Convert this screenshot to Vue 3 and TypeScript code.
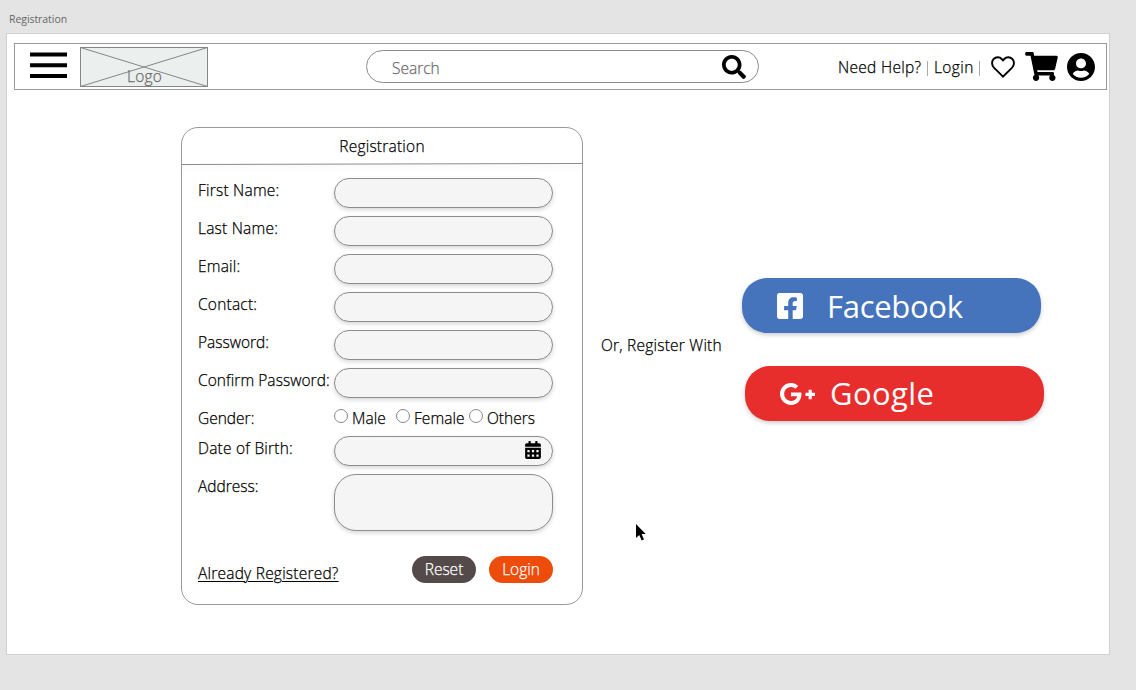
<script setup lang="ts">
interface Field {
  label: string
  id: string
  kind: 'text' | 'gender' | 'date' | 'area'
}

const fields: Field[] = [
  { label: 'First Name:', id: 'first', kind: 'text' },
  { label: 'Last Name:', id: 'last', kind: 'text' },
  { label: 'Email:', id: 'email', kind: 'text' },
  { label: 'Contact:', id: 'contact', kind: 'text' },
  { label: 'Password:', id: 'password', kind: 'text' },
  { label: 'Confirm Password:', id: 'confirm', kind: 'text' },
  { label: 'Gender:', id: 'gender', kind: 'gender' },
  { label: 'Date of Birth:', id: 'dob', kind: 'date' },
  { label: 'Address:', id: 'address', kind: 'area' },
]
const genders: string[] = ['Male', 'Female', 'Others']
</script>

<template>
  <div class="canvas">
    <div class="board-name"><span>Registration</span></div>
    <main class="board">
      <header class="nav">
        <svg class="menu" viewBox="0 0 37 27"><path d="M0 .5h37v4H0zM0 11.3h37v4H0zM0 22h37v4H0z" /></svg>
        <div class="logo">
          <svg viewBox="0 0 128 40"><rect x=".5" y=".5" width="127" height="39" /><path d="M.5.5l127 39M127.5.5L.5 39.5" /></svg>
          <span>Logo</span>
        </div>
        <div class="search">
          <span>Search</span>
          <svg viewBox="0 0 512 512"><path d="M505 442.7L405.3 343c-4.5-4.5-10.6-7-17-7H372c27.6-35.3 44-79.7 44-128C416 93.1 322.9 0 208 0S0 93.1 0 208s93.1 208 208 208c48.3 0 92.7-16.4 128-44v16.3c0 6.4 2.5 12.5 7 17l99.7 99.7c9.4 9.4 24.6 9.4 33.9 0l28.3-28.3c9.4-9.4 9.4-24.6.1-34zM208 336c-70.7 0-128-57.2-128-128 0-70.7 57.2-128 128-128 70.7 0 128 57.2 128 128 0 70.7-57.2 128-128 128z" /></svg>
        </div>
        <div class="links">
          <span class="help">Need Help?</span><i></i><span class="signin">Login</span><i></i>
        </div>
        <svg class="heart" viewBox="0 0 24 22"><path d="M12 20.6L2.9 11.6C.6 9.2.5 5.500 2.500 3.200 5 .5 8.600.8 10.700 3L12 4.400 13.300 3C15.400.8 19 .5 21.500 3.200c2 2.300 1.900 6-.4 8.400z" /></svg>
        <svg class="cart" viewBox="0 0 576 512"><path d="M528.12 301.319l47.273-208C578.806 78.301 567.391 64 551.99 64H159.208l-9.166-44.81C147.758 8.021 137.93 0 126.529 0H24C10.745 0 0 10.745 0 24v16c0 13.255 10.745 24 24 24h69.883l70.248 343.435C147.325 417.1 136 435.222 136 456c0 30.928 25.072 56 56 56s56-25.072 56-56c0-15.674-6.447-29.835-16.824-40h209.647C430.447 426.165 424 440.326 424 456c0 30.928 25.072 56 56 56s56-25.072 56-56c0-22.172-12.888-41.332-31.579-50.405l5.517-24.276c3.413-15.018-8.002-29.319-23.403-29.319H218.117l-6.545-32h293.145c11.206 0 20.92-7.754 23.403-18.681z" /></svg>
        <svg class="user" viewBox="0 8 496 496"><path d="M248 8C111 8 0 119 0 256s111 248 248 248 248-111 248-248S385 8 248 8zm0 96c48.6 0 88 39.4 88 88s-39.4 88-88 88-88-39.4-88-88 39.4-88 88-88zm0 344c-58.7 0-111.3-26.6-146.5-68.2 18.8-35.4 55.6-59.8 98.5-59.8 2.4 0 4.8.4 7.1 1.1 13 4.2 26.6 6.9 40.9 6.9 14.3 0 28-2.7 40.9-6.9 2.3-.7 4.7-1.1 7.1-1.1 42.9 0 79.7 24.4 98.5 59.8C359.3 421.4 306.7 448 248 448z" /></svg>
      </header>

      <div class="content">
        <section class="card">
          <h1><span>Registration</span></h1>
          <svg class="rule" viewBox="0 0 400 2" preserveAspectRatio="none"><path d="M0 1.500L400 .5" /></svg>
          <div class="rows">
            <div v-for="f in fields" :key="f.id" class="row" :class="'row-' + f.kind">
              <span class="label" :class="'l-' + f.id">{{ f.label }}</span>
              <div v-if="f.kind === 'gender'" class="genders">
                <span v-for="g in genders" :key="g" class="option" :class="'o-' + g.toLowerCase()"><b></b><span>{{ g }}</span></span>
              </div>
              <div v-else class="box">
                <svg v-if="f.kind === 'date'" viewBox="0 0 448 512"><path fill-rule="evenodd" d="M0 464c0 26.500 21.500 48 48 48h352c26.500 0 48-21.500 48-48V192H0zM64 256h64v64H64zm128 0h64v64h-64zm128 0h64v64h-64zM64 384h64v64H64zm128 0h64v64h-64zm128 0h64v64h-64zM400 64h-48V16c0-8.800-7.200-16-16-16h-32c-8.800 0-16 7.200-16 16v48H160V16c0-8.800-7.200-16-16-16h-32c-8.800 0-16 7.200-16 16v48H48C21.500 64 0 85.500 0 112v48h448v-48c0-26.500-21.500-48-48-48z" /></svg>
              </div>
            </div>
          </div>
          <div class="actions">
            <a>Already Registered?</a>
            <button class="reset">Reset</button>
            <button class="login">Login</button>
          </div>
        </section>

        <p class="or">Or, Register With</p>

        <div class="social">
          <div class="pill facebook">
            <svg viewBox="0 32 448 448"><path d="M400 32H48A48 48 0 0 0 0 80v352a48 48 0 0 0 48 48h145V327.700h-71V256h71v-54.600c0-62.200 37-96.500 93.700-96.500 27.100 0 55.500 4.800 55.500 4.800v61h-31.300c-30.800 0-40.400 19.100-40.400 38.700V256h68.800l-11 71.700h-57.800V480H400a48 48 0 0 0 48-48V80a48 48 0 0 0-48-48z" /></svg>
            <span>Facebook</span>
          </div>
          <div class="pill google">
            <svg viewBox="12 64 616 384"><path d="M386.061 228.496c1.834 9.692 3.143 19.384 3.143 31.956C389.204 370.205 315.599 448 204.8 448c-106.084 0-192-85.915-192-192s85.916-192 192-192c51.864 0 95.083 18.859 128.611 50.292l-52.126 50.03c-14.145-13.621-39.028-29.599-76.485-29.599-65.484 0-118.92 54.221-118.92 121.277 0 67.056 53.436 121.277 118.92 121.277 75.961 0 104.513-54.745 108.965-82.773H204.8v-66.009h181.261zm185.406 6.437V179.2h-56.001v55.733h-55.733v56.001h55.733v55.733h56.001v-55.733H627.2v-56.001h-55.733z" /></svg>
            <span>Google</span>
          </div>
        </div>
      </div>
    </main>
    <svg class="cursor" viewBox="0 0 10 17"><path d="M0 0v14l3.200-3 2.500 5.500 2.300-1L5.600 10H9.700z" /></svg>
  </div>
</template>

<style>
body { margin: 0; overflow: hidden; }
</style>

<style scoped>
* { box-sizing: border-box; }
.canvas {
  position: relative;
  width: 1136px;
  height: 690px;
  background: #e4e4e4;
  font: 300 15.5px/22px "Open Sans", "Noto Sans", sans-serif;
  letter-spacing: .22px;
  -webkit-text-stroke: .25px currentColor;
  color: #000;
  white-space: nowrap;
  overflow: hidden;
}
svg { display: block; flex: none; }
.board-name {
  height: 33px;
  padding: 11px 0 0 9px;
  font-size: 10.5px;
  font-weight: 400;
  line-height: 16px;
  letter-spacing: -.06px;
  -webkit-text-stroke: 0;
  color: #666;
}
.board {
  width: 1104px;
  height: 622px;
  margin-left: 6px;
  padding: 9px 0 0 7px;
  border: 1px solid #d0d0d0;
  background: #fff;
}
.nav {
  display: flex;
  align-items: flex-start;
  width: 1093px;
  height: 47px;
  border: 1px solid #999;
}
.menu { width: 37px; height: 27px; margin: 8px 0 0 15px; }
.logo { position: relative; width: 128px; height: 40px; margin: 3px 0 0 13px; color: #6c6c6c; }
.logo svg { width: 128px; height: 40px; fill: #ebefee; stroke: #858585; }
.logo span { position: absolute; left: 47px; top: 18px; }
.search {
  display: flex;
  width: 393px;
  height: 33px;
  margin: 6px 0 0 158px;
  padding: 0 12px 0 25px;
  justify-content: space-between;
  border: 1px solid #8c8c8c;
  border-radius: 17px;
  color: #6c6c6c;
  letter-spacing: 0;
}
.search span { padding-top: 6px; }
.search svg { width: 24px; height: 24px; margin-top: 4px; }
.links { display: flex; width: 146px; height: 22px; margin: 12px 0 0 79px; }
.help { width: 89px; letter-spacing: .3px; }
.links i { width: 1px; height: 15px; margin-top: 5px; background: #aaa; }
.signin { width: 50px; padding-left: 6px; letter-spacing: .4px; }
.links i:last-child { margin-left: 1px; }
.heart { width: 24px; height: 22px; margin: 12px 0 0 7px; fill: none; stroke: #000; stroke-width: 1.9; }
.cart { width: 33px; height: 29px; margin: 8px 0 0 10px; }
.user { width: 28px; height: 28px; margin: 9px 0 0 9px; }

.content { display: flex; align-items: flex-start; }
.card {
  width: 402px;
  height: 478px;
  margin: 37px 0 0 167px;
  border: 1px solid #999;
  border-radius: 17px;
}
h1 { height: 35px; margin: 0; padding-top: 7px; font-size: 15.5px; font-weight: inherit; line-height: 22px; text-align: center; }
.rule { width: 400px; height: 2px; stroke: #8a8a8a; fill: none; }
.rows { padding: 13px 29px 0 16px; background: linear-gradient(#fafafa, #fff 8px); }
.row { display: flex; height: 38px; }
.row-gender { height: 30px; }
.row-area { height: 82px; }
.label { width: 136px; flex: none; padding-top: 1px; }
.l-confirm { letter-spacing: .06px; }
.l-password, .l-gender, .l-address { letter-spacing: 0; }
.box {
  width: 219px;
  height: 30px;
  flex: none;
  border: 1px solid #8d8d8d;
  border-radius: 16px;
  background: #f5f5f5;
  box-shadow: 0 2px 4px rgba(0, 0, 0, .16);
}
.row-area .box { height: 57px; border-radius: 22px; }
.box svg { width: 16px; height: 18px; margin: 4px 0 0 190px; }
.genders { display: flex; padding-top: 1px; letter-spacing: .05px; }
.option { display: flex; }
.option b { width: 14px; height: 14px; margin: 2px 4px 0 0; border: 1px solid #888; border-radius: 50%; }
.o-male { width: 62px; }
.o-female { width: 73px; }
.o-others { letter-spacing: 0; }
.actions { display: flex; padding: 0 29px 0 16px; }
.actions a { width: 214px; flex: none; padding-top: 6px; text-decoration: underline; text-decoration-thickness: 1px; text-underline-offset: 2px; }
button {
  width: 64px;
  height: 27px;
  flex: none;
  margin: 0;
  padding: 0 0 2px;
  border: 0;
  border-radius: 14px;
  color: #fff;
  font: inherit;
}
.reset { background: #544a49; }
.login { margin-left: 13px; background: #ed4c0a; }
.or { width: 141px; margin: 244px 0 0 18px; }
.social { margin-top: 188px; }
.pill {
  display: flex;
  width: 299px;
  height: 55px;
  padding-left: 35px;
  border-radius: 25px;
  color: #fff;
  font-size: 31px;
  font-weight: 400;
  line-height: 56px;
  -webkit-text-stroke: 0;
  box-shadow: 0 2px 4px rgba(0, 0, 0, .2);
}
.pill svg { fill: #fff; }
.facebook { background: #4574bc; letter-spacing: -.3px; }
.facebook svg { width: 26px; height: 26px; margin: 15px 24px 0 0; }
.google { margin: 33px 0 0 3px; background: #e82d2d; letter-spacing: .4px; line-height: 54px; }
.google svg { width: 35px; height: 22px; margin: 17px 15px 0 0; }
.cursor { position: absolute; left: 636px; top: 524px; width: 10px; height: 17px; }
</style>
